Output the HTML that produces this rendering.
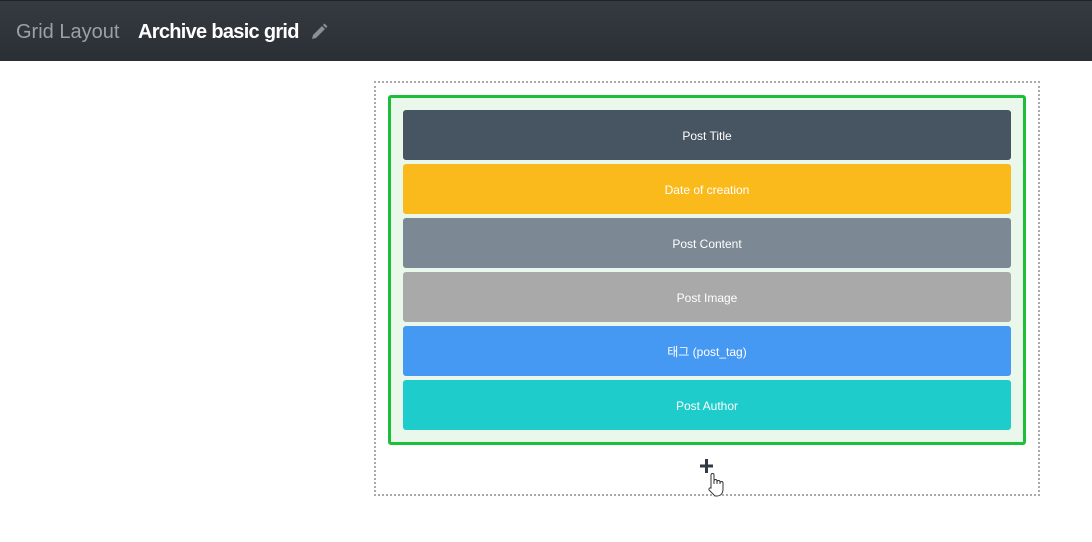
<!DOCTYPE html><html><head><style>
body{margin:0;width:1092px;height:542px;background:#fff;font-family:"Liberation Sans","Noto Sans CJK KR",sans-serif;position:relative;overflow:hidden}
.hd{position:absolute;left:0;top:0;width:1092px;height:61px;background:linear-gradient(#353a41,#2a2f35);border-top:1px solid #1f2327;box-sizing:border-box}
.t1{position:absolute;left:16px;top:20px;font-size:20px;color:#9aa0a6}
.t2{position:absolute;left:138px;top:20px;font-size:20px;font-weight:bold;color:#fff;letter-spacing:-0.7px}
.dot{position:absolute;left:374px;top:81px;width:666px;height:415px;border:2px dotted #aaa;box-sizing:border-box}
.g{position:absolute;left:388px;top:95px;width:638px;height:350px;border:3px solid #1dbf3a;border-radius:3px;background:#eaf8ec;box-sizing:border-box}
.r{position:absolute;left:403px;width:608px;height:50px;border-radius:3px;color:#fff;font-size:12px;text-align:center;line-height:53px}
</style></head><body>
<div class="hd"><span class="t1">Grid Layout</span><span class="t2">Archive basic grid</span>
<svg style="position:absolute;left:310px;top:22px" width="18" height="18" viewBox="0 0 18 18"><path d="M2 16l1-4 9-9 3 3-9 9z M13 2l1.5-1.5 3 3L16 5z" fill="#8a9096"/></svg></div>
<div class="dot"></div>
<div class="g"></div>
<div class="r" style="top:110px;background:#475461">Post Title</div>
<div class="r" style="top:164px;background:#fbba1b">Date of creation</div>
<div class="r" style="top:218px;background:#7c8893">Post Content</div>
<div class="r" style="top:272px;background:#a9a9a9">Post Image</div>
<div class="r" style="top:326px;background:#4699f2">태그 (post_tag)</div>
<div class="r" style="top:380px;background:#1ecccc">Post Author</div>
<svg style="position:absolute;left:699px;top:458px" width="30" height="40" viewBox="0 0 30 40">
<path d="M7.5 1v14M1 8h13" stroke="#333a44" stroke-width="3"/>
<path d="M12 28v-11a1.5 1.5 0 0 1 3 0v9v-3a1.5 1.5 0 0 1 3 0v3v-2a1.5 1.5 0 0 1 3 0v2v-1a1.5 1.5 0 0 1 3 0v6c0 4-2 7-6 7h-2l-6-6a1.5 1.5 0 0 1 2-2z" fill="#fff" stroke="#333" stroke-width="1"/></svg>
</body></html>
